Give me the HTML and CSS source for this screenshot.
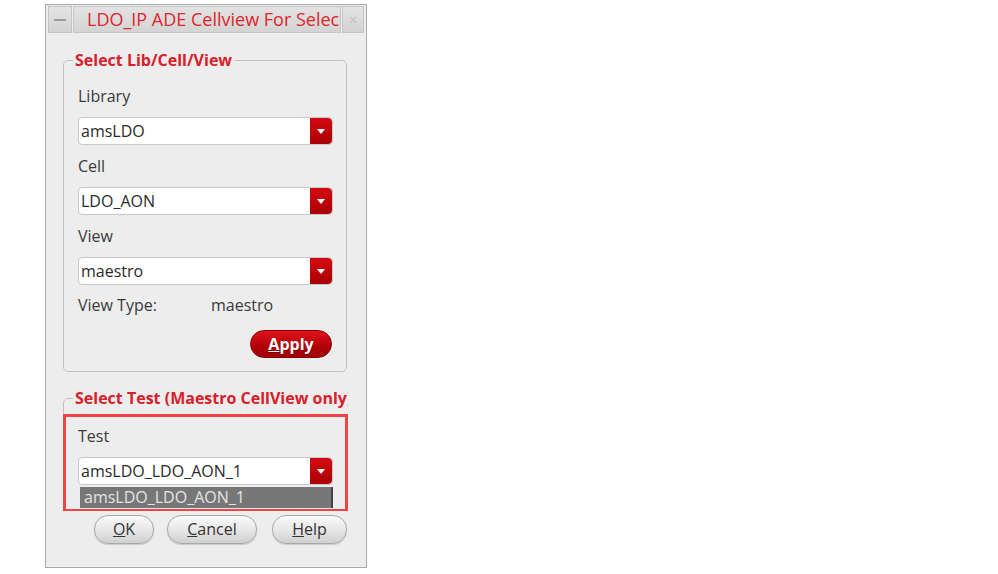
FILE: index.html
```html
<!DOCTYPE html>
<html>
<head>
<meta charset="utf-8">
<link rel="stylesheet" href="styles.css">
</head>
<body>
<div class="window">
  <div class="titlebar">
    <div class="tb-btn tb-min"><span class="dash"></span></div>
    <div class="title">LDO_IP ADE Cellview For Selec</div>
    <div class="tb-btn tb-close"><span class="x">&#x2715;</span></div>
  </div>
  <div class="content">
    <div class="groups">
      <fieldset class="group g1">
        <legend>Select Lib/Cell/View</legend>
        <div class="label first">Library</div>
        <div class="combo"><span class="value">amsLDO</span><span class="arrow"><span class="tri"></span></span></div>
        <div class="label">Cell</div>
        <div class="combo"><span class="value">LDO_AON</span><span class="arrow"><span class="tri"></span></span></div>
        <div class="label">View</div>
        <div class="combo"><span class="value">maestro</span><span class="arrow"><span class="tri"></span></span></div>
        <div class="viewtype"><span class="vt-key">View Type:</span><span>maestro</span></div>
        <div class="apply-row"><button class="apply"><u>A</u>pply</button></div>
      </fieldset>
      <fieldset class="group g2">
        <legend>Select Test (Maestro CellView only)</legend>
        <div class="label first">Test</div>
        <div class="combo"><span class="value">amsLDO_LDO_AON_1</span><span class="arrow"><span class="tri"></span></span></div>
      </fieldset>
      <div class="popup">amsLDO_LDO_AON_1</div>
      <div class="highlight"></div>
    </div>
    <div class="buttons">
      <button class="btn btn-ok"><u>O</u>K</button>
      <button class="btn btn-cancel"><u>C</u>ancel</button>
      <button class="btn btn-help"><u>H</u>elp</button>
    </div>
  </div>
</div>
</body>
</html>
```
FILE: styles.css
```css
html, body {
  margin: 0;
  padding: 0;
  background: #ffffff;
}
body {
  font-family: "Open Sans", "Noto Sans", "DejaVu Sans", sans-serif;
  color: #333333;
}
.window {
  margin: 4px 0 0 45px;
  width: 320px;
  height: 562px;
  border: 1px solid #a9a9a9;
  background: #ededed;
  box-sizing: content-box;
  position: relative;
}
.titlebar {
  display: flex;
  height: 27px;
  margin: 1px 2px 0 2px;
  gap: 1px;
}
.tb-btn {
  background: linear-gradient(#e4e4e4, #d2d2d2);
  border: 1px solid #c4c4c4;
  display: flex;
  align-items: center;
  justify-content: center;
}
.tb-min {
  width: 22px;
}
.dash {
  width: 12px;
  height: 2px;
  background: #9a9a9a;
}
.tb-close {
  width: 20px;
}
.x {
  font-size: 12px;
  color: #c4c4c4;
}
.title {
  flex: 1;
  background: linear-gradient(#e2e2e2, #d4d4d4);
  border: 1px solid #c6c6c6;
  color: #e0262c;
  font-size: 18px;
  line-height: 25px;
  padding-left: 13px;
  white-space: nowrap;
  overflow: hidden;
}
.content {
  padding: 0 0 0 17px;
}
.groups {
  position: relative;
  width: 285px;
  height: 460px;
  overflow: hidden;
  padding-top: 18px;
}
.group {
  margin: 0;
  border: 1px solid #c2c2c2;
  border-radius: 5px;
  padding: 14px 13px 13px 14px;
  box-sizing: border-box;
}
.group legend {
  color: #d8202a;
  font-weight: bold;
  font-size: 16px;
  line-height: 18px;
  padding: 0 2px;
  margin-left: -5px;
  white-space: nowrap;
}
.g1 {
  width: 284px;
}
.g2 {
  width: 330px;
  margin-top: 17px;
  padding-top: 16px;
  padding-bottom: 60px;
}
.label {
  font-size: 16px;
  line-height: 20px;
  height: 20px;
  margin-top: 11px;
  color: #3a3a3a;
}
.label.first {
  margin-top: 3px;
}
.combo {
  margin-top: 11px;
  width: 255px;
  height: 28px;
  display: flex;
  align-items: stretch;
  background: #ffffff;
  border: 1px solid #c8c8c8;
  border-radius: 4px;
  box-sizing: border-box;
  overflow: hidden;
}
.combo .value {
  flex: 1;
  font-size: 16px;
  line-height: 26px;
  padding-left: 2px;
  color: #2a2a2a;
}
.combo .arrow {
  width: 22px;
  background: linear-gradient(#d40a10, #a80006);
  display: flex;
  align-items: center;
  justify-content: center;
  border-radius: 0 4px 4px 0;
}
.tri {
  width: 0;
  height: 0;
  border-left: 4px solid transparent;
  border-right: 4px solid transparent;
  border-top: 5px solid #ffffff;
}
.viewtype {
  margin-top: 10px;
  font-size: 16px;
  line-height: 20px;
  display: flex;
  color: #3a3a3a;
}
.vt-key {
  width: 133px;
}
.apply-row {
  display: flex;
  justify-content: flex-end;
  margin-top: 15px;
  padding-right: 1px;
}
.apply {
  width: 82px;
  height: 28px;
  border-radius: 14px;
  border: 1px solid #8a0006;
  background: linear-gradient(#e0121a, #b00008 60%, #a00006);
  color: #ffffff;
  font-family: "Open Sans", "Noto Sans", sans-serif;
  font-weight: bold;
  font-size: 16px;
  padding: 0;
  text-shadow: 0 1px 0 rgba(0,0,0,0.3);
}
.popup {
  position: absolute;
  left: 17px;
  top: 454px;
  width: 253px;
  height: 21px;
  background: #777777;
  border-right: 2px solid #444444;
  box-sizing: border-box;
  color: #e4e4e4;
  font-size: 16px;
  line-height: 21px;
  padding-left: 4px;
  white-space: nowrap;
}
.highlight {
  position: absolute;
  left: 0;
  top: 381px;
  width: 285px;
  height: 98px;
  border: 3px solid #f04448;
  box-sizing: border-box;
}
.buttons {
  display: flex;
  gap: 13px;
  margin-top: 4px;
  padding-left: 31px;
}
.btn {
  height: 29px;
  border-radius: 14px;
  border: 1px solid #a8a8a8;
  background: linear-gradient(#fafafa, #e6e6e6 55%, #cfcfcf);
  color: #333333;
  font-family: "Open Sans", "Noto Sans", sans-serif;
  font-size: 16px;
  line-height: 27px;
  padding: 0;
  box-shadow: 0 1px 1px rgba(0,0,0,0.15);
}
.btn-ok { width: 60px; }
.btn-cancel { width: 90px; }
.btn-help { width: 75px; margin-left: 2px; }
```
